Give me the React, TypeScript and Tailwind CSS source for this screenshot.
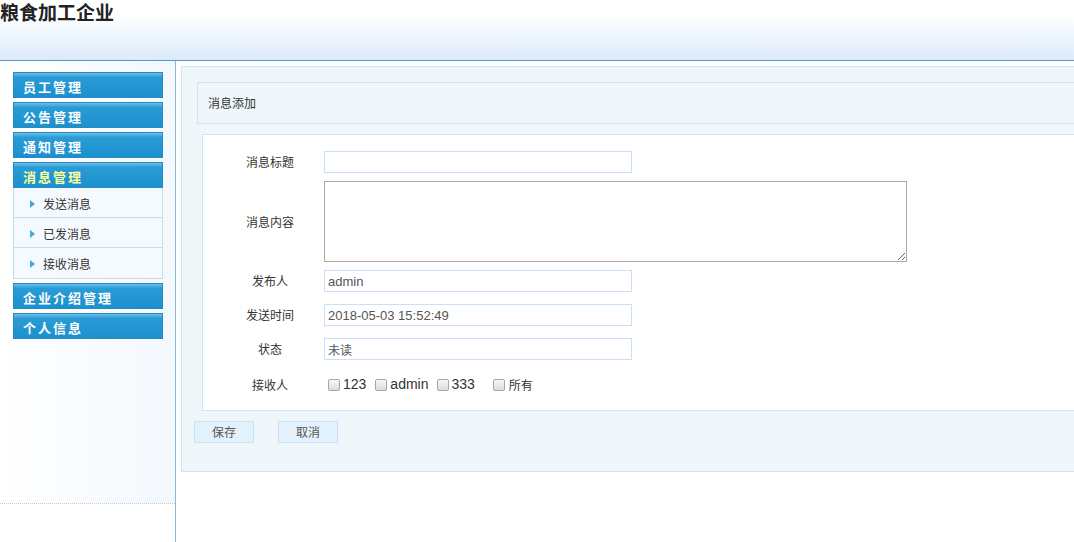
import React from "react";

const font = "font-['Noto_Sans_CJK_SC','Noto_Sans',sans-serif]";

function MenuHead({ label, active }: { label: string; active?: boolean }) {
  return (
    <div
      className={`h-[26px] border border-[#2a88c2] bg-[linear-gradient(#6cc0ea_0%,#2a9bd5_18%,#1a91ce_100%)] pl-[9px] pt-[4px] text-[13px] font-bold leading-[20px] tracking-[2px] ${
        active ? "text-[#ffff99]" : "text-white"
      }`}
    >
      {label}
    </div>
  );
}

function SubItem({ label, last }: { label: string; last?: boolean }) {
  return (
    <div
      className={`flex h-[30px] items-center pl-[16px] pt-[2px] text-[12px] text-[#333] ${
        last ? "" : "border-b border-[#c8dce8]"
      }`}
    >
      <svg width="5" height="8" viewBox="0 0 5 8" className="mr-[8px]">
        <path d="M0 0 L5 4 L0 8 Z" fill="#4aa6de" />
      </svg>
      {label}
    </div>
  );
}

function Box() {
  return (
    <span className="mr-[3px] inline-block h-[12px] w-[12px] rounded-[2px] border border-[#a6a6a6] bg-[linear-gradient(#f8f8f8,#dcdcdc)]" />
  );
}

export default function App() {
  return (
    <div className={`h-[542px] w-[1074px] overflow-hidden bg-white ${font}`}>
      {/* Header */}
      <div className="h-[60px] bg-[linear-gradient(#ffffff_0%,#ffffff_25%,#dbeafa_100%)]">
        <div className="text-[19px] font-bold leading-[23px] text-[#222]">粮食加工企业</div>
      </div>
      <div className="h-px bg-[#4d99d6]" />

      <div className="flex h-[481px]">
        {/* Sidebar */}
        <div className="w-[176px] shrink-0 border-r border-[#8fb6d3]">
          <div className="h-[443px] border-b border-dotted border-[#bccdd9] bg-[linear-gradient(90deg,#ffffff_0%,#f3f8fd_100%)] px-[13px] pt-[11px]">
            <div className="flex w-[150px] flex-col gap-[4px]">
              <MenuHead label="员工管理" />
              <MenuHead label="公告管理" />
              <MenuHead label="通知管理" />
              <div>
                <MenuHead label="消息管理" active />
                <div className="border border-t-0 border-[#c8dce8] bg-[#f5faff]">
                  <SubItem label="发送消息" />
                  <SubItem label="已发消息" />
                  <SubItem label="接收消息" last />
                </div>
              </div>
              <MenuHead label="企业介绍管理" />
              <MenuHead label="个人信息" />
            </div>
          </div>
        </div>

        {/* Main */}
        <div className="flex-1 overflow-hidden pl-[5px] pt-[5px]">
          <div className="mr-[-20px] h-[406px] border border-[#cce5fb] bg-[#f0f7fb] pt-[15px]">
            <div className="ml-[15px] flex h-[42px] items-center border border-[#cce5fb] pl-[10px] text-[12px] text-[#333]">
              消息添加
            </div>
            <div className="ml-[20px] mt-[10px] h-[277px] border border-[#cce5fb] bg-white pl-[13px] pt-[16px] text-[12px] text-[#333]">
              <div className="flex items-center">
                <div className="w-[108px] text-center">消息标题</div>
                <input
                  defaultValue=""
                  className="h-[22px] w-[308px] border border-[#c8e1f9] px-[3px] font-['Liberation_Sans',sans-serif] text-[12px] text-[#555] outline-none"
                />
              </div>
              <div className="mt-[8px] flex items-center">
                <div className="w-[108px] text-center">消息内容</div>
                <textarea className="block h-[81px] w-[583px] border border-[#a9a9a9] outline-none" />
              </div>
              <div className="mt-[8px] flex items-center">
                <div className="w-[108px] text-center">发布人</div>
                <input
                  defaultValue="admin"
                  className="h-[22px] w-[308px] border border-[#c8e1f9] px-[3px] font-['Liberation_Sans',sans-serif] text-[13px] text-[#555] outline-none"
                />
              </div>
              <div className="mt-[12px] flex items-center">
                <div className="w-[108px] text-center">发送时间</div>
                <input
                  defaultValue="2018-05-03 15:52:49"
                  className="h-[22px] w-[308px] border border-[#c8e1f9] px-[3px] font-['Liberation_Sans',sans-serif] text-[13px] text-[#555] outline-none"
                />
              </div>
              <div className="mt-[12px] flex items-center">
                <div className="w-[108px] text-center">状态</div>
                <input
                  defaultValue="未读"
                  className="h-[22px] w-[308px] border border-[#c8e1f9] px-[3px] text-[12px] text-[#555] outline-none"
                />
              </div>
              <div className="mt-[14px] flex items-center">
                <div className="w-[108px] text-center">接收人</div>
                <div className="flex items-center pl-[4px] font-['Liberation_Sans','Noto_Sans_CJK_SC',sans-serif] text-[14px] text-[#333]">
                  <Box />
                  <span className="mr-[9px]">123</span>
                  <Box />
                  <span className="mr-[8px]">admin</span>
                  <Box />
                  <span className="mr-[18px]">333</span>
                  <Box />
                  <span className="ml-[1px] mt-[3px] text-[12px]">所有</span>
                </div>
              </div>
            </div>
            <div className="ml-[12px] mt-[10px] flex gap-[24px]">
              <button className="h-[22px] w-[60px] border border-[#c7e2fa] bg-[#e3f1fd] text-[12px] text-[#555]">
                保存
              </button>
              <button className="h-[22px] w-[60px] border border-[#c7e2fa] bg-[#e3f1fd] text-[12px] text-[#555]">
                取消
              </button>
            </div>
          </div>
        </div>
      </div>
    </div>
  );
}
